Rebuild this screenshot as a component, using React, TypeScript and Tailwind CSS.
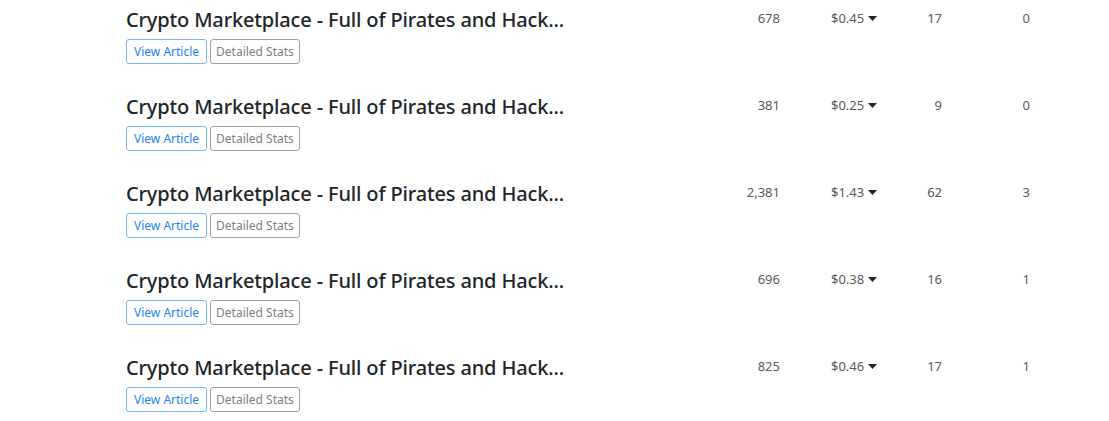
import React from 'react';

type Row = { views: string; earnings: string; comments: string; shares: string };

const rows: Row[] = [
  { views: '678', earnings: '$0.45', comments: '17', shares: '0' },
  { views: '381', earnings: '$0.25', comments: '9', shares: '0' },
  { views: '2,381', earnings: '$1.43', comments: '62', shares: '3' },
  { views: '696', earnings: '$0.38', comments: '16', shares: '1' },
  { views: '825', earnings: '$0.46', comments: '17', shares: '1' },
];

const Caret = () => (
  <svg width="9" height="5" viewBox="0 0 9 5" className="ml-[4px] inline-block">
    <path d="M0 0h9L4.5 5z" fill="#212529" />
  </svg>
);

export default function App() {
  return (
    <div
      className="w-[1109px] h-[421px] bg-white overflow-hidden pt-[7px]"
      style={{ fontFamily: '"Noto Sans", "Open Sans", Arial, sans-serif' }}
    >
      {rows.map((r, i) => (
        <div key={i} className="grid grid-cols-[700px_80px_120px_42px_88px] h-[87px]">
          {/* Title + actions */}
          <div className="pl-[126px]">
            <h3 className="text-[20px] leading-[26px] tracking-[-0.15px] font-medium text-[#212529] whitespace-nowrap">
              Crypto Marketplace - Full of Pirates and Hack...
            </h3>
            <div className="flex gap-[3px] mt-[6px]">
              <button className="h-[25px] px-[7px] text-[12px] leading-none text-[#1a84f5] border border-[#7ab4f5] rounded-[3px] bg-white">
                View Article
              </button>
              <button className="h-[25px] px-[5px] text-[12px] leading-none text-[#7a8087] border border-[#a0a4a8] rounded-[3px] bg-white">
                Detailed Stats
              </button>
            </div>
          </div>
          {/* Stats */}
          <div className="text-right text-[13px] leading-[20px] text-[#555b61] pt-[1px]">{r.views}</div>
          <div className="pl-[51px] text-[13px] leading-[20px] text-[#555b61] pt-[1px] flex items-center h-[21px]">
            {r.earnings}
            <Caret />
          </div>
          <div className="text-right text-[13px] leading-[20px] text-[#555b61] pt-[1px]">{r.comments}</div>
          <div className="text-right text-[13px] leading-[20px] text-[#555b61] pt-[1px]">{r.shares}</div>
        </div>
      ))}
    </div>
  );
}
